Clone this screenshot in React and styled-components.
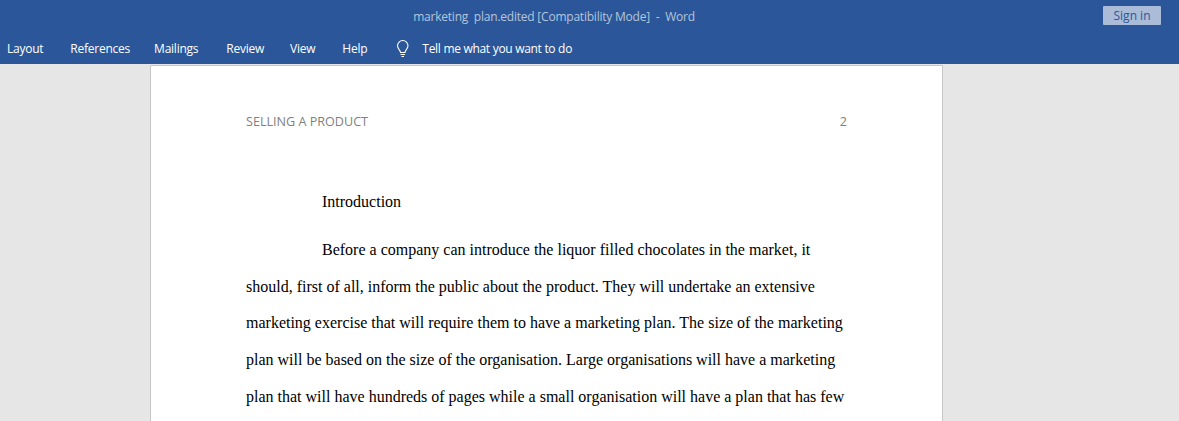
import React from 'react'
import styled, { createGlobalStyle } from 'styled-components'

const Global = createGlobalStyle`
  html, body {
    margin: 0;
    padding: 0;
    height: 100%;
    overflow: hidden;
    background: #e6e6e6;
  }
`

const Window = styled.div`
  width: 1179px;
  height: 421px;
  display: flex;
  flex-direction: column;
  overflow: hidden;
  background: #e6e6e6;
`
const Ribbon = styled.header`
  flex: none;
  height: 64px;
  background: #2b579a;
  font-family: "Open Sans", "Noto Sans", sans-serif;
`
const TitleBar = styled.div`
  height: 32px;
  display: flex;
  align-items: flex-start;
  justify-content: space-between;
  padding: 6px 18px 0 0;
  box-sizing: border-box;
`
const Title = styled.div`
  flex: 1;
  margin: 1px 0 0 5px;
  text-align: center;
  font-size: 12px;
  line-height: 19px;
  white-space: pre;
  letter-spacing: -0.22px;
  color: #b4c5dc;
`
const SignIn = styled.button`
  width: 58px;
  height: 19px;
  padding: 0;
  border: 0;
  border-radius: 1px;
  background: #aabcd7;
  color: #2b579a;
  font-family: inherit;
  font-size: 12px;
  line-height: 19px;
`
const TabRow = styled.nav`
  height: 32px;
  display: flex;
  align-items: center;
  padding: 1px 0 0 7px;
  box-sizing: border-box;
  color: #fff;
  font-size: 12px;
  letter-spacing: -0.24px;
`
const Tab = styled.span`
  margin-right: ${(p) => p.$gap}px;
  line-height: 31px;
`
const TellMe = styled.span`
  margin-left: 11px;
  line-height: 31px;
  letter-spacing: -0.3px;
`
const Workspace = styled.main`
  flex: 1;
  min-height: 0;
  display: flex;
  padding-left: 150px;
`
const Page = styled.article`
  width: 601px;
  height: 500px;
  flex: none;
  margin-top: 1px;
  padding: 0 95px;
  background: #fff;
  border: 1px solid #c6c6c6;
  border-bottom: 0;
`
const PageHeader = styled.div`
  display: flex;
  justify-content: space-between;
  padding-top: 47px;
  font-family: "Open Sans", "Noto Sans", sans-serif;
  font-size: 12.6px;
  line-height: 17px;
  color: #7f7f7f;
`
const Heading = styled.p`
  margin: 62px 0 0;
  padding-left: 76px;
  font-family: "Liberation Serif", "Times New Roman", serif;
  font-size: 16px;
  line-height: 20px;
  color: #000;
`
const Body = styled.div`
  margin-top: 20px;
  font-family: "Liberation Serif", "Times New Roman", serif;
  font-size: 16px;
  line-height: 36.7px;
  color: #000;
`
const Line = styled.span`
  display: block;
  white-space: nowrap;
  text-indent: ${(p) => (p.$first ? 76 : 0)}px;
`

const Bulb = () => (
  <svg width="16" height="18" viewBox="0 0 16 18" fill="none" stroke="#fff" strokeWidth="1.1">
    <path d="M5.5 12.5 C5.5 10 2.5 9 2.5 5.8 A5.2 5.2 0 0 1 13 5.8 C13 9 10 10 10 12.5 Z" />
    <path d="M5.5 14.5 H10 M6.5 16.5 H9" />
  </svg>
)

const tabs = [
  ['Layout', 27],
  ['References', 24],
  ['Mailings', 28],
  ['Review', 26],
  ['View', 27],
  ['Help', 28],
]

const lines = [
  'Before a company can introduce the liquor filled chocolates in the market, it',
  'should, first of all, inform the public about the product. They will undertake an extensive',
  'marketing exercise that will require them to have a marketing plan. The size of the marketing',
  'plan will be based on the size of the organisation. Large organisations will have a marketing',
  'plan that will have hundreds of pages while a small organisation will have a plan that has few',
]

export default function App() {
  return (
    <Window>
      <Global />
      <Ribbon>
        <TitleBar>
          <Title>{'marketing  plan.edited [Compatibility Mode]  -  Word'}</Title>
          <SignIn>Sign in</SignIn>
        </TitleBar>
        <TabRow>
          {tabs.map(([name, gap]) => (
            <Tab key={name} $gap={gap}>{name}</Tab>
          ))}
          <Bulb />
          <TellMe>Tell me what you want to do</TellMe>
        </TabRow>
      </Ribbon>
      <Workspace>
        <Page>
          <PageHeader>
            <span>SELLING A PRODUCT</span>
            <span>2</span>
          </PageHeader>
          <Heading>Introduction</Heading>
          <Body>
            {lines.map((text, i) => (
              <Line key={text} $first={i === 0}>{text}</Line>
            ))}
          </Body>
        </Page>
      </Workspace>
    </Window>
  )
}
